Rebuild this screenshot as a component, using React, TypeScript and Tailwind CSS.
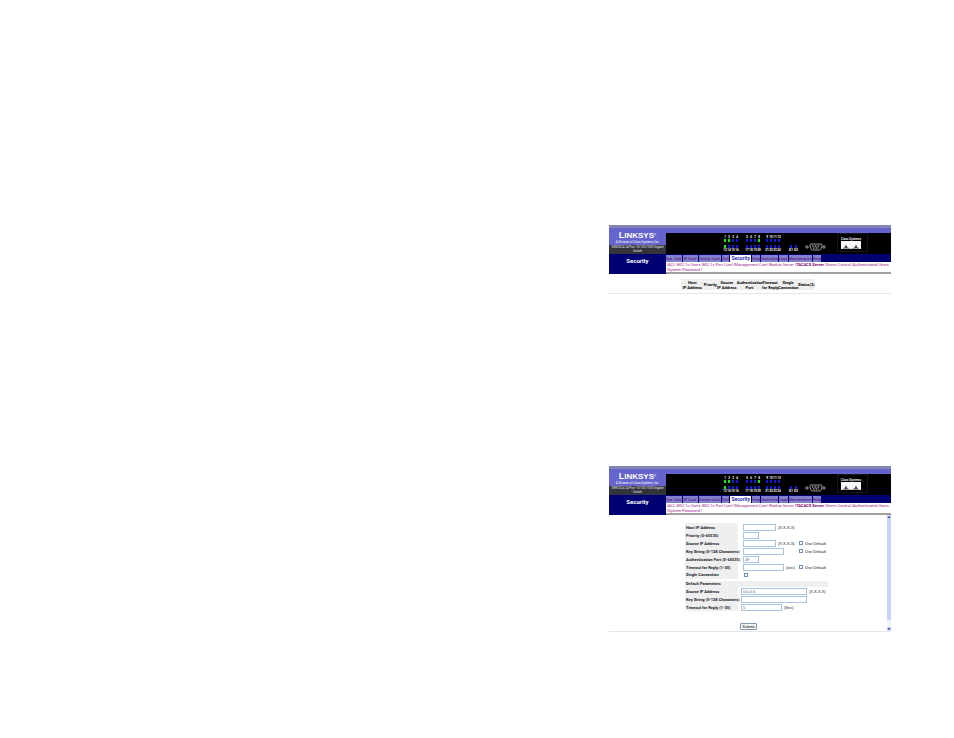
import React from 'react';

const tabs = ['Sys. Info.', 'IP Conf.', 'Switch Conf.', 'QoS', 'Security', 'Sntp', 'Statistics', 'Logs', 'Maintenance', 'Help'];

const links = [
  'ACL',
  '802.1x Users',
  '802.1x Port Conf',
  'Management Conf',
  'Radius Server',
  'TACACS Server',
  'Storm Control',
  'Authenticated Users',
  'System Password',
];

const columns = [
  { lines: ['Host', 'IP Address'], width: 'w-[17%]' },
  { lines: ['Priority'], width: 'w-[10%]' },
  { lines: ['Source', 'IP Address'], width: 'w-[15%]' },
  { lines: ['Authentication', 'Port'], width: 'w-[19%]' },
  { lines: ['Timeout', 'for Reply'], width: 'w-[12%]' },
  { lines: ['Single', 'Connection'], width: 'w-[15%]' },
  { lines: ['Status(2)'], width: 'w-[12%]' },
];

interface Field {
  id: string;
  label: string;
  size: string;
  value?: string;
  unit?: string;
  useDefault?: boolean;
}

const hostFields: Field[] = [
  { id: 'host-ip', label: 'Host IP Address', size: 'w-[33px]', unit: '(X.X.X.X)' },
  { id: 'priority', label: 'Priority (0-65535)', size: 'w-4' },
  { id: 'source-ip', label: 'Source IP Address', size: 'w-[33px]', unit: '(X.X.X.X)', useDefault: true },
  { id: 'key', label: 'Key String (0-128 Characters)', size: 'w-[41px]', useDefault: true },
  { id: 'port', label: 'Authentication Port (0-65535)', size: 'w-4', value: '49' },
  { id: 'timeout', label: 'Timeout for Reply (1-30)', size: 'w-[41px]', unit: '(sec)', useDefault: true },
];

const defaultFields: Field[] = [
  { id: 'default-source-ip', label: 'Source IP Address', size: 'w-[66px]', value: '0.0.0.0', unit: '(X.X.X.X)' },
  { id: 'default-key', label: 'Key String (0-128 Characters)', size: 'w-[66px]' },
  { id: 'default-timeout', label: 'Timeout for Reply (1-30)', size: 'w-[41px]', value: '5', unit: '(Sec)' },
];

const NARROW = 'font-[Roboto,sans-serif]';
const LABEL = 'flex h-2 w-[53px] shrink-0 items-center bg-[#efefef] pl-px font-bold whitespace-nowrap';
const INPUT = 'h-[7px] border border-[#a9c3e0] bg-white pl-px text-[4px] leading-none text-gray-600';
const CHECKBOX = 'size-1 appearance-none border border-[#6f93b8] bg-white';

// x positions of the port LEDs, in groups of four
const ledX = [2, 6, 10, 14, 24, 28, 32, 36, 44, 48, 52, 56];

function PortPanel() {
  return (
    <svg className="h-5 w-[146px] shrink-0" viewBox="0 0 146 20" aria-label="Port status">
      {ledX.map((x, i) => (
        <g key={x} fontSize="3" fontWeight="bold" fontFamily="Roboto, sans-serif" textAnchor="middle" fill="#fff">
          <text x={x} y="5">{i + 1}</text>
          <rect x={x - 1} y="6" width="2" height="3" fill={[0, 1, 7].includes(i) ? '#10f010' : '#1414e0'} />
          <rect x={x - 1} y="12" width="2" height="3" fill={i === 0 ? '#10f010' : '#1414e0'} />
          <text x={x} y="18">{i + 13}</text>
        </g>
      ))}
      {[68, 73].map((x, i) => (
        <g key={x} fontSize="3" fontWeight="bold" fontFamily="Roboto, sans-serif" textAnchor="middle" fill="#fff">
          <rect x={x - 1} y="12" width="2" height="3" fill="#1414e0" />
          <text x={x} y="18">{`G${i + 1}`}</text>
        </g>
      ))}
      {/* console connector */}
      <g fill="none" stroke="#d8d8d8" strokeWidth="0.7">
        <circle cx="84" cy="14" r="1.2" />
        <circle cx="101" cy="14" r="1.2" />
        <path d="M88 11h10q1.500 0 1 1.700l-.8 3q-.4 1.300-1.400 1.300h-7.600q-1 0-1.400-1.300l-.8-3q-.5-1.700 1-1.700z" />
        <path d="M89 13h8M90 15h6" strokeWidth="1.2" strokeDasharray="1 .5" />
      </g>
      {/* vendor badge */}
      <rect x="114.500" y=".5" width="30" height="18" fill="#000" stroke="#2c2c2c" strokeDasharray="1 1" />
      <text x="128" y="7" fontSize="3" fontWeight="bold" fontFamily="Roboto, sans-serif" textAnchor="middle" fill="#e8e8e8">Cisco Systems</text>
      <rect x="118" y="8" width="20" height="8" fill="#f8f8f8" />
      <path d="M119 15.500l2.500-1 1.500-3 1.500 3 3.500 1 3.500-1 1.500-3 1.500 3 2.500 1z" fill="#444" />
    </svg>
  );
}

function SwitchHeader() {
  return (
    <header>
      <div className="h-[3px] bg-[#8585b5]" />
      <div className="flex">
        <div className={`${NARROW} flex w-[57px] shrink-0 flex-col text-center whitespace-nowrap`}>
          <div className="bg-[#6464cc] pt-[3px] text-white">
            <div className="font-['Liberation_Sans',sans-serif] text-[9px] leading-[9px] font-bold">
              L<span className="text-[8px]">INKSYS</span>
              <span className="align-top text-[3px]">®</span>
            </div>
            <div className="text-[3px] leading-[5px]">A Division of Cisco Systems, Inc.</div>
          </div>
          <div className="bg-[#33333b] pb-px text-[3px] leading-[4px] text-gray-200">
            SRW2024 24-Port 10/100/1000 Gigabit
            <br />
            Switch
          </div>
          <div className="flex-1 bg-[#000072] pt-[3px] text-[6px] leading-[8px] font-bold text-white">Security</div>
        </div>
        <div className="flex min-w-0 flex-1 flex-col">
          <div className="h-[5px] bg-[#6464cc]" />
          <div className="flex h-[21px] justify-end bg-black pr-[22px]">
            <PortPanel />
          </div>
          <nav className={`${NARROW} flex h-2 items-end gap-px bg-[#000072] text-[4px] leading-[7px] whitespace-nowrap`}>
            {tabs.map((tab) => (
              <a
                key={tab}
                href="#"
                className={
                  tab === 'Security'
                    ? 'h-[7px] bg-white px-px text-[5px] font-bold text-[#3030b0]'
                    : 'h-[7px] bg-[#8080cc] text-[#580070]'
                }
              >
                {tab}
              </a>
            ))}
          </nav>
          <nav className={`${NARROW} h-[10px] bg-white pl-px text-[4px] leading-[5px] text-[#a02090]`}>
            |
            {links.map((link) => (
              <React.Fragment key={link}>
                <a href="#" className={link === 'TACACS Server' ? 'font-bold text-[#800070]' : ''}>
                  {link}
                </a>
                {' |'}
              </React.Fragment>
            ))}
          </nav>
          <div className="h-[2px] bg-[#a0a09c]" />
        </div>
      </div>
    </header>
  );
}

function FieldRow({ field, inset }: { field: Field; inset: string }) {
  return (
    <div className="flex h-2 items-center">
      <label htmlFor={field.id} className={`${NARROW} ${LABEL}`}>
        {field.label}
      </label>
      <div className={`flex flex-1 items-center ${inset}`}>
        <input id={field.id} defaultValue={field.value} className={`${INPUT} ${field.size}`} />
        {field.unit && <span className="pl-[2px]">{field.unit}</span>}
      </div>
      {field.useDefault && (
        <label className="flex w-[29px] items-center gap-[2px] whitespace-nowrap">
          <input type="checkbox" className={CHECKBOX} />
          Use Default
        </label>
      )}
    </div>
  );
}

function ServerTable() {
  return (
    <section>
      <SwitchHeader />
      <div className="border-b border-gray-200 pt-[5px] pr-[77px] pb-[3px] pl-[72px]">
        <table className={`${NARROW} w-full table-fixed border-collapse bg-[#efefef] text-[4px] leading-[5px]`}>
          <thead>
            <tr className="h-[11px]">
              {columns.map((column, i) => (
                <th key={i} className={`${column.width} p-0 text-center font-bold whitespace-nowrap`}>
                  {column.lines.map((line) => (
                    <div key={line}>{line}</div>
                  ))}
                </th>
              ))}
            </tr>
          </thead>
        </table>
      </div>
    </section>
  );
}

function ServerForm() {
  return (
    <section>
      <SwitchHeader />
      <div className="flex border-b border-gray-200">
        <form className="flex-1 pt-2 pb-px pl-[76px] text-[4px] leading-[5px] text-gray-900">
          <div className="w-[143px]">
            {hostFields.map((field) => (
              <FieldRow key={field.id} field={field} inset="pl-[5px]" />
            ))}
            <div className="flex h-[7px] items-center">
              <label htmlFor="single" className={`${NARROW} ${LABEL}`}>
                Single Connection
              </label>
              <input id="single" type="checkbox" className={`${CHECKBOX} ml-1.5`} />
            </div>
            <h2 className={`${NARROW} mt-[3px] h-[6px] bg-[#efefef] pl-px font-bold`}>Default Parameters</h2>
            {defaultFields.map((field) => (
              <FieldRow key={field.id} field={field} inset="pl-[3px]" />
            ))}
            <button type="button" className="mt-3 ml-[55px] block h-[7px] w-[17px] rounded-[1px] border border-[#8098b4] bg-[#f4f4f0] text-[4px] leading-none">
              Submit
            </button>
          </div>
        </form>
        <div className="flex w-1 flex-col bg-[#f0f4ff] text-[#3050a0]">
          <svg className="h-1 w-1 bg-[#c4d4fc]" viewBox="0 0 4 4">
            <path d="M.5 3L2 1l1.500 2z" fill="currentColor" />
          </svg>
          <div className="mb-[7px] flex-1 bg-[#c4d4fc]" />
          <svg className="h-1 w-1 bg-[#c4d4fc]" viewBox="0 0 4 4">
            <path d="M.5 1L2 3l1.500-2z" fill="currentColor" />
          </svg>
        </div>
      </div>
    </section>
  );
}

export default function App() {
  return (
    <main className="flex min-h-screen justify-end bg-white pt-[225px] pr-[63px] font-['Liberation_Sans',sans-serif] text-black">
      <div className="flex w-full max-w-[282px] flex-col gap-[172px]">
        <ServerTable />
        <ServerForm />
      </div>
    </main>
  );
}
